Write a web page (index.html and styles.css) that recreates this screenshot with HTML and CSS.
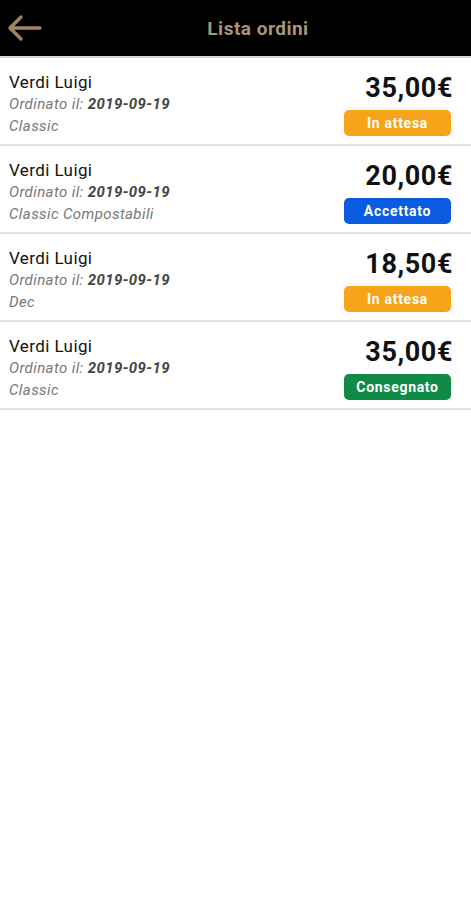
FILE: index.html
```html
<!DOCTYPE html>
<html>
<head>
    <title>Lista ordini</title>
    <link rel="stylesheet" href="styles.css">
</head>
<body>
    <header class="topbar">
        <button class="back" aria-label="Indietro">
            <svg width="36" height="28" viewBox="0 0 36 28">
                <path d="M34 14 H5 M15 3 L4 14 L15 25" fill="none" stroke="#a2845f" stroke-width="3.4" stroke-linecap="round" stroke-linejoin="round"/>
            </svg>
        </button>
        <h1 class="title">Lista ordini</h1>
    </header>

    <ul class="orders">
        <li class="order">
            <div class="info">
                <div class="name">Verdi Luigi</div>
                <div class="meta">Ordinato il: <b>2019-09-19</b></div>
                <div class="meta">Classic</div>
            </div>
            <div class="side">
                <div class="price">35,00€</div>
                <span class="badge waiting">In attesa</span>
            </div>
        </li>
        <li class="order">
            <div class="info">
                <div class="name">Verdi Luigi</div>
                <div class="meta">Ordinato il: <b>2019-09-19</b></div>
                <div class="meta">Classic Compostabili</div>
            </div>
            <div class="side">
                <div class="price">20,00€</div>
                <span class="badge accepted">Accettato</span>
            </div>
        </li>
        <li class="order">
            <div class="info">
                <div class="name">Verdi Luigi</div>
                <div class="meta">Ordinato il: <b>2019-09-19</b></div>
                <div class="meta">Dec</div>
            </div>
            <div class="side">
                <div class="price">18,50€</div>
                <span class="badge waiting">In attesa</span>
            </div>
        </li>
        <li class="order">
            <div class="info">
                <div class="name">Verdi Luigi</div>
                <div class="meta">Ordinato il: <b>2019-09-19</b></div>
                <div class="meta">Classic</div>
            </div>
            <div class="side">
                <div class="price">35,00€</div>
                <span class="badge delivered">Consegnato</span>
            </div>
        </li>
    </ul>
</body>
</html>
```

FILE: styles.css
```css
/* Pagina */
body {
    margin: 0;
    font-family: Roboto, "Liberation Sans", sans-serif;
    background: #fff;
    color: #111;
}

/* Barra superiore */
.topbar {
    display: flex;
    align-items: center;
    height: 56px;
    background: #000;
    border-bottom: 2px solid #d6d6d6;
}

.back {
    width: 45px;
    height: 56px;
    padding: 0 0 0 6px;
    border: none;
    background: none;
    display: flex;
    align-items: center;
}

.title {
    flex: 1;
    margin: 0;
    text-align: center;
    font-size: 19px;
    letter-spacing: 0.5px;
    font-weight: bold;
    color: #a8957c;
}

/* Lista ordini */
.orders {
    list-style: none;
    margin: 0;
    padding: 0;
}

.order {
    display: flex;
    justify-content: space-between;
    align-items: flex-start;
    height: 86px;
    padding: 0 20px 0 9px;
    border-bottom: 2px solid #e2e2e2;
}

.info {
    padding-top: 13px;
}

.name {
    font-size: 17px;
    letter-spacing: 0.4px;
    line-height: 22px;
    color: #111;
}

.meta {
    font-size: 15px;
    letter-spacing: 0.4px;
    line-height: 22px;
    font-style: italic;
    color: #777;
}

.meta b {
    color: #444;
}

.side {
    display: flex;
    flex-direction: column;
    align-items: flex-end;
    padding-top: 15px;
}

.price {
    font-size: 27px;
    letter-spacing: 0.6px;
    line-height: 30px;
    font-weight: bold;
    color: #111;
    margin-right: -2px;
}

/* Stato */
.badge {
    display: block;
    width: 107px;
    height: 26px;
    margin-top: 7px;
    border-radius: 5px;
    color: #fff;
    font-size: 14px;
    letter-spacing: 0.7px;
    font-weight: bold;
    line-height: 26px;
    text-align: center;
}

.waiting {
    background: #f8a41a;
}

.accepted {
    background: #0b5be1;
}

.delivered {
    background: #108b46;
}
```
